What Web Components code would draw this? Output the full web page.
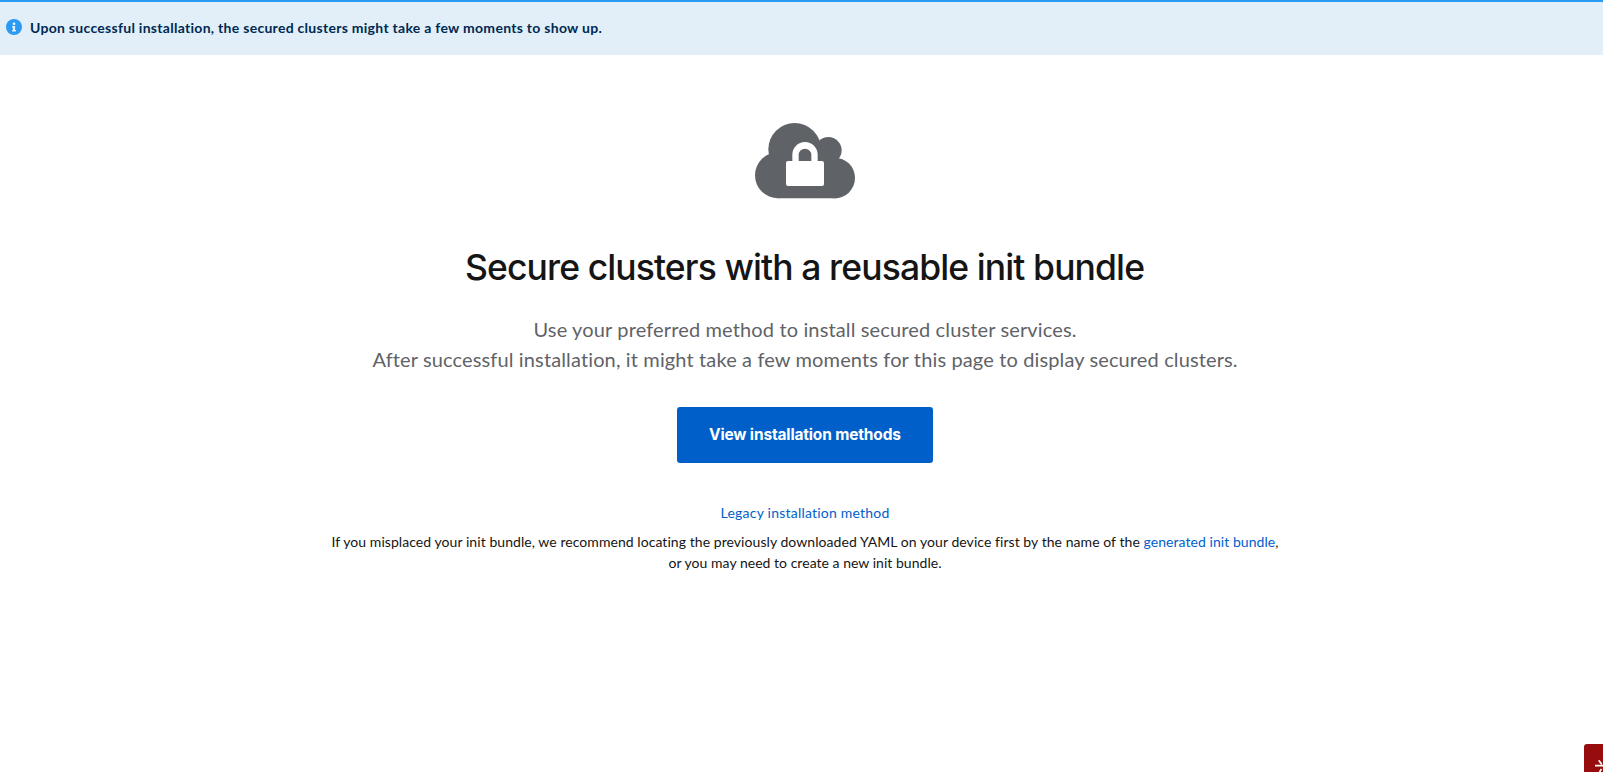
<!DOCTYPE html>
<html lang="en">
<head>
<meta charset="utf-8">
<title>Secure clusters</title>
<style>
html,body{margin:0;height:100%;overflow:hidden;background:#fff}
body{font-family:Lato,"Open Sans",sans-serif;color:#151515}
</style>
</head>
<body>
<clusters-page></clusters-page>
<script>
const define = (name, html, extra) => customElements.define(name, class extends HTMLElement {
  constructor() {
    super();
    const t = document.createElement('template');
    t.innerHTML = html;
    this.attachShadow({ mode: 'open' }).append(t.content.cloneNode(true));
  }
  connectedCallback() { if (extra) extra(this); }
});

/* One line of text whose tracking is adjusted to a measure given in pixels. */
define('text-line', `<style>
:host{display:block;white-space:nowrap}
span{display:inline-block}
</style><span><slot></slot></span>`, el => {
  const span = el.shadowRoot.querySelector('span');
  const width = parseFloat(el.getAttribute('measure'));
  const count = el.textContent.length;
  const natural = span.getBoundingClientRect().width;
  const track = (width - natural) / (count - 1);
  span.style.letterSpacing = track + 'px';
  span.style.marginRight = -track + 'px';
});

define('info-alert', `<style>
:host{display:flex;box-sizing:border-box;height:55px;border-top:2px solid #2b9af3;background:#e2eff9;padding:17px 6px;gap:8px;color:#002952;font-size:14px;font-weight:700;line-height:17px}
svg{display:block;width:16px;height:16px;flex:none}
</style>
<svg viewBox="0 0 16 16"><circle cx="8" cy="8" r="8" fill="#2b9af3"/><circle cx="8" cy="4.8" r="1.4" fill="#e7f1fa"/><path d="M6.1 7h3v4h.8v1.4H6.1V11h.8V8.4h-.8z" fill="#e7f1fa"/></svg>
<slot></slot>`);

define('cloud-lock', `<style>
:host{display:block;width:130px;height:100px}
svg{display:block;width:100%;height:100%}
</style>
<svg viewBox="0 0 390 300"><g fill="#5f6368"><circle cx="164" cy="118" r="79"/><circle cx="265" cy="121" r="40"/><circle cx="114" cy="196" r="69"/><circle cx="284" cy="204" r="61"/><path d="M114 150L164 110L290 143V265H114z"/></g><path d="M157 153V134a38 38 0 0 1 76 0v19h13q6 0 6 6v63q0 6-6 6H144q-6 0-6-6v-63q0-6 6-6zm19 0h38v-18a19 19 0 0 0-38 0z" fill="#fff"/></svg>`);

define('primary-button', `<style>
:host{display:block}
button{display:flex;align-items:center;justify-content:center;box-sizing:border-box;width:256px;height:56px;border:0;border-radius:3px;padding:0;background:#005fc8;color:#fff;font:700 15.5px/24px Inter,sans-serif}
</style><button><slot></slot></button>`);

define('text-link', `<style>
:host{display:inline}
a{color:#0060cc;text-decoration:none}
</style><a href="#"><slot></slot></a>`);

define('corner-button', `<style>
:host{position:absolute;right:0;bottom:0;width:19px;height:28px;background:#970c0c;border-top-left-radius:3px;overflow:hidden}
svg{display:block}
</style><svg width="19" height="28" viewBox="0 0 19 28" fill="none" stroke="#fff" stroke-width="1.7"><path d="M11 21.7h8M14.7 16.3l3 4M15.5 28l2-3"/></svg>`);

define('empty-state', `<style>
:host{display:flex;flex-direction:column;align-items:center;padding-top:55px;width:1610px}
h1{margin:34px 0 0;font-family:Inter,sans-serif;font-size:35.5px;font-weight:500;line-height:47px;color:#151515}
.body{display:flex;flex-direction:column;align-items:center;margin-top:23px;font-size:20px;line-height:30px;color:#5f6368}
primary-button{margin-top:33px}
.legacy{margin-top:39px;font-size:14px;line-height:21px}
.note{display:flex;flex-direction:column;align-items:center;margin-top:8px;font-size:14px;line-height:21px}
</style>
<cloud-lock></cloud-lock>
<h1><text-line measure="680">Secure clusters with a reusable init bundle</text-line></h1>
<div class="body"><text-line measure="543">Use your preferred method to install secured cluster services.</text-line>
<text-line measure="865">After successful installation, it might take a few moments for this page to display secured clusters.</text-line></div>
<primary-button><text-line measure="192">View installation methods</text-line></primary-button>
<div class="legacy"><text-line measure="169"><text-link>Legacy installation method</text-link></text-line></div>
<div class="note"><text-line measure="947">If you misplaced your init bundle, we recommend locating the previously downloaded YAML on your device first by the name of the <text-link>generated init bundle</text-link>,</text-line>
<text-line measure="273">or you may need to create a new init bundle.</text-line></div>`);

define('clusters-page', `<style>
:host{display:block;position:relative;width:1603px;height:772px;overflow:hidden;background:#fff}
</style>
<info-alert><text-line measure="572">Upon successful installation, the secured clusters might take a few moments to show up.</text-line></info-alert>
<empty-state></empty-state>
<corner-button></corner-button>`);
</script>
</body>
</html>
